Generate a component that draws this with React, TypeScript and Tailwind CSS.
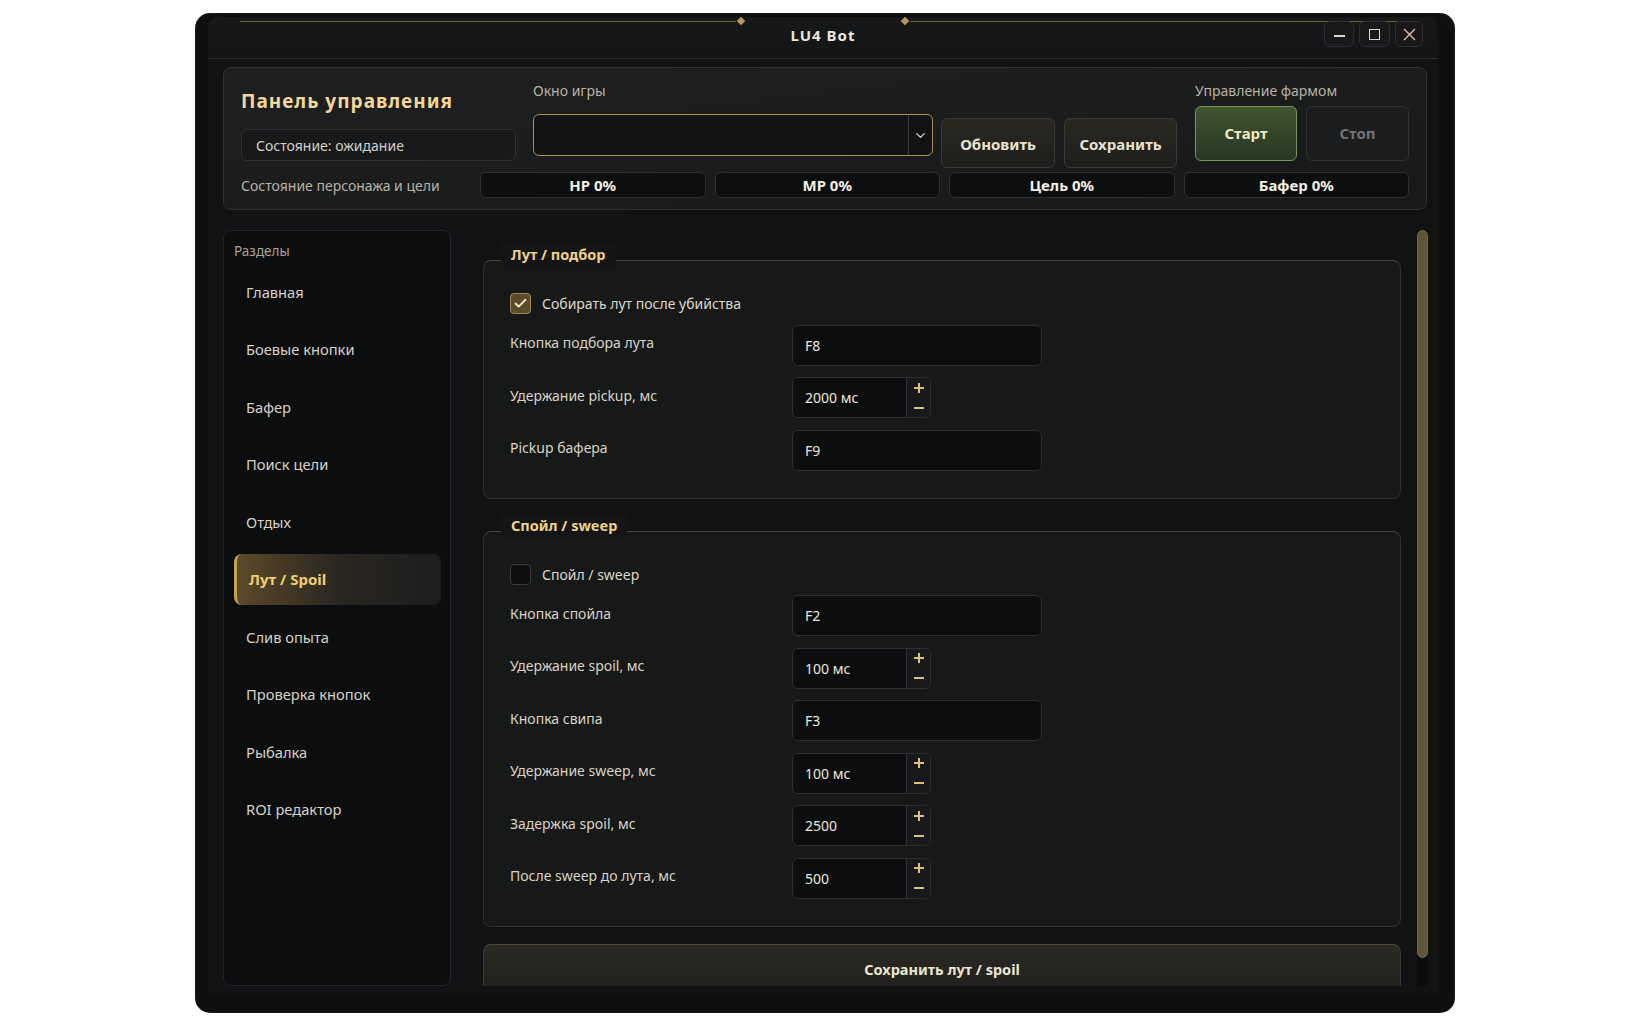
import { Check, ChevronDown } from 'lucide-react';

const sections = [
  'Главная',
  'Боевые кнопки',
  'Бафер',
  'Поиск цели',
  'Отдых',
  'Лут / Spoil',
  'Слив опыта',
  'Проверка кнопок',
  'Рыбалка',
  'ROI редактор',
];

function Plus() {
  return (
    <svg width="12" height="12" viewBox="0 0 12 12">
      <path d="M6 1v10M1 6h10" stroke="#dcc47f" strokeWidth="2" />
    </svg>
  );
}

function Minus() {
  return (
    <svg width="12" height="12" viewBox="0 0 12 12">
      <path d="M1 6h10" stroke="#dcc47f" strokeWidth="2" />
    </svg>
  );
}

function CheckBox({ checked, label }: { checked: boolean; label: string }) {
  return (
    <div className="flex items-center gap-[11px] h-[21px]">
      <div
        className={`w-[21px] h-[21px] rounded-[4px] border flex items-center justify-center ${
          checked ? 'bg-[#5b4a2b] border-[#a38853]' : 'bg-[#0d0e10] border-[#3a3b3e]'
        }`}
      >
        {checked && <Check size={15} strokeWidth={3} color="#f5e7c0" />}
      </div>
      <span className="text-[14px] text-[#ddd7ca]">{label}</span>
    </div>
  );
}

function TextRow({ label, value }: { label: string; value: string }) {
  return (
    <div className="flex items-center">
      <div className="w-[282px] pb-[5px] text-[14px] text-[#d9d3c6]">{label}</div>
      <div className="w-[250px] h-[41px] rounded-md border border-[#2d2e31] bg-[#0c0d0f] flex items-center px-[12px] text-[14px] text-[#ece6d8]">
        {value}
      </div>
    </div>
  );
}

function SpinRow({ label, value }: { label: string; value: string }) {
  return (
    <div className="flex items-center">
      <div className="w-[282px] pb-[5px] text-[14px] text-[#d9d3c6]">{label}</div>
      <div className="w-[139px] h-[41px] rounded-md border border-[#2d2e31] bg-[#0c0d0f] flex overflow-hidden">
        <div className="flex-1 flex items-center px-[12px] text-[14px] text-[#ece6d8]">{value}</div>
        <div className="w-[24px] border-l border-[#2d2e31] bg-[#18191b] flex flex-col items-center justify-center gap-[8px]">
          <Plus />
          <Minus />
        </div>
      </div>
    </div>
  );
}

function Group({ title, children }: { title: string; children: React.ReactNode }) {
  return (
    <div className="relative rounded-lg border border-[#2d2f30] border-t-[#48432f] bg-[#171918] px-[26px] pt-[32px] pb-[27px]">
      <div className="absolute -top-[18px] left-[17px] px-[10px] h-[24px] flex items-center bg-[#141516] text-[14.5px] font-bold text-[#efd08c]">
        {title}
      </div>
      {children}
    </div>
  );
}

export default function App() {
  return (
    <div className="min-h-screen bg-white pl-[196px] pt-[14px] font-['Noto_Sans',sans-serif]">
      <div className="w-[1258px] h-[998px] rounded-[14px] bg-[#0e0f11] flex flex-col pl-[12px] pr-[16px] pt-[3px] pb-[16px] shadow-[0_0_0_1px_#1a1b1d]">
        <div className="flex-1 flex flex-col bg-[#111214] rounded-t-[10px] min-h-0">
          {/* title bar */}
          <div className="relative h-[42px] shrink-0 rounded-t-[10px] bg-gradient-to-b from-[#17181a] to-[#131416] border-b border-[#2b2c2e] grid grid-cols-[1fr_auto_1fr]">
            <div className="absolute top-[4px] left-[32px] w-[496px] h-px bg-[#6f5e37]" />
            <div className="absolute top-[1px] left-[530px] w-[6px] h-[6px] rotate-45 bg-[#b8985a]" />
            <div className="absolute top-[1px] left-[694px] w-[6px] h-[6px] rotate-45 bg-[#b8985a]" />
            <div className="absolute top-[4px] left-[702px] w-[487px] h-px bg-[#6f5e37]" />
            <div />
            <div className="flex items-center pb-[4px] text-[15px] font-bold tracking-[1px] text-[#ece7dc]">LU4 Bot</div>
            <div className="flex justify-end items-start pt-[4px] pr-[15px] gap-[5px] relative">
              <div className="w-[30px] h-[26px] rounded-md border border-[#2e2f32] bg-[#18191b] flex items-center justify-center">
                <div className="w-[11px] h-[1.5px] bg-[#ddd6c6] mt-[4px]" />
              </div>
              <div className="w-[31px] h-[26px] rounded-md border border-[#2e2f32] bg-[#18191b] flex items-center justify-center">
                <div className="w-[11px] h-[11px] border-[1.5px] border-[#ddd6c6]" />
              </div>
              <div className="w-[28px] h-[26px] rounded-md border border-[#2e2f32] bg-[#1b1718] flex items-center justify-center">
                <svg width="13" height="13" viewBox="0 0 13 13">
                  <path d="M1 1l11 11M12 1L1 12" stroke="#e3bdb4" strokeWidth="1.4" />
                </svg>
              </div>
            </div>
          </div>

          {/* body */}
          <div className="flex-1 flex flex-col pl-[15px] pr-[10px] pt-[8px] pb-[10px] min-h-0">
            {/* control panel */}
            <div className="h-[143px] mr-px shrink-0 rounded-lg border border-[#33312a] bg-gradient-to-br from-[#1e1f1f] to-[#18191a] px-[17px] flex flex-col">
              <div className="flex h-[100px]">
                <div className="w-[275px] flex flex-col">
                  <div className="mt-[21px] h-[24px] text-[19px] leading-[24px] font-bold tracking-[1px] text-[#f2d69b]">
                    Панель управления
                  </div>
                  <div className="mt-[16px] h-[32px] rounded-md border border-[#2f3134] bg-[#17191b] flex items-center px-[14px] text-[14px] text-[#d6d0c3]">
                    Состояние: ожидание
                  </div>
                </div>
                <div className="ml-[17px] w-[400px] flex flex-col">
                  <div className="mt-[12px] h-[20px] text-[14px] text-[#b8b2a5]">Окно игры</div>
                  <div className="mt-[14px] h-[42px] rounded-md border border-[#b18e4a] bg-[#111315] flex justify-end">
                    <div className="w-[24px] border-l border-[#3a3a3a] flex items-center justify-center">
                      <ChevronDown size={15} strokeWidth={2.2} color="#dcd3bd" />
                    </div>
                  </div>
                </div>
                <div className="ml-[8px] mt-[50px] w-[114px] h-[50px] rounded-md border border-[#3a3935] bg-gradient-to-b from-[#2a2821] to-[#1e1e1d] flex items-center justify-center pt-[2px] text-[15px] font-bold text-[#e9e2d0]">
                  Обновить
                </div>
                <div className="ml-[9px] mt-[50px] w-[113px] h-[50px] rounded-md border border-[#3a3935] bg-gradient-to-b from-[#2a2821] to-[#1e1e1d] flex items-center justify-center pt-[2px] text-[15px] font-bold text-[#e9e2d0]">
                  Сохранить
                </div>
                <div className="ml-[18px] flex-1 flex flex-col">
                  <div className="mt-[12px] h-[20px] text-[14px] text-[#b8b2a5]">Управление фармом</div>
                  <div className="mt-[6px] flex gap-[9px]">
                    <div className="w-[102px] h-[55px] rounded-md border border-[#7a955a] bg-gradient-to-b from-[#405430] to-[#293722] flex items-center justify-center text-[15px] font-bold text-[#f3e6c2]">
                      Старт
                    </div>
                    <div className="w-[103px] h-[55px] rounded-md border border-[#2f3032] bg-[#1b1c1d] flex items-center justify-center text-[15px] font-bold text-[#6f7276]">
                      Стоп
                    </div>
                  </div>
                </div>
              </div>
              <div className="mt-[4px] flex items-center h-[26px]">
                <div className="w-[239px] text-[14px] text-[#b8b2a5]">Состояние персонажа и цели</div>
                <div className="flex-1 grid grid-cols-4 gap-[9px]">
                  {['HP 0%', 'MP 0%', 'Цель 0%', 'Бафер 0%'].map((b) => (
                    <div
                      key={b}
                      className="h-[26px] rounded-md border border-[#2e2f31] bg-[#0d0e10] flex items-center justify-center text-[15px] font-bold text-[#f3efe4]"
                    >
                      {b}
                    </div>
                  ))}
                </div>
              </div>
            </div>

            {/* main */}
            <div className="mt-[20px] flex-1 flex min-h-0">
              <div className="w-[228px] rounded-lg border border-[#232427] bg-[#0c0d0f] px-[10px] pr-[9px] pt-[11px] flex flex-col">
                <div className="h-[18px] text-[13.5px] leading-[18px] text-[#a9a397]">Разделы</div>
                <div className="mt-[6.5px] flex flex-col gap-[6.5px]">
                  {sections.map((s) =>
                    s === 'Лут / Spoil' ? (
                      <div
                        key={s}
                        className="h-[51px] rounded-lg border-l-[3px] border-[#c9a24f] bg-gradient-to-r from-[#5c4a2a] via-[#2a2620] to-[#1c1d1e] flex items-center pl-[12px] text-[15px] font-bold text-[#f2cd6c]"
                      >
                        {s}
                      </div>
                    ) : (
                      <div key={s} className="h-[51px] flex items-center pl-[12px] text-[14.7px] text-[#d8d2c5]">
                        {s}
                      </div>
                    )
                  )}
                </div>
              </div>

              <div className="ml-[32px] flex-1 min-w-0 overflow-hidden pt-[30px] flex flex-col">
                <Group title="Лут / подбор">
                  <CheckBox checked label="Собирать лут после убийства" />
                  <div className="mt-[10.5px] flex flex-col gap-[11.5px]">
                    <TextRow label="Кнопка подбора лута" value="F8" />
                    <SpinRow label="Удержание pickup, мс" value="2000 мс" />
                    <TextRow label="Pickup бафера" value="F9" />
                  </div>
                </Group>
                <div className="mt-[32px]">
                  <Group title="Спойл / sweep">
                    <CheckBox checked={false} label="Спойл / sweep" />
                    <div className="mt-[10.5px] flex flex-col gap-[11.5px]">
                      <TextRow label="Кнопка спойла" value="F2" />
                      <SpinRow label="Удержание spoil, мс" value="100 мс" />
                      <TextRow label="Кнопка свипа" value="F3" />
                      <SpinRow label="Удержание sweep, мс" value="100 мс" />
                      <SpinRow label="Задержка spoil, мс" value="2500" />
                      <SpinRow label="После sweep до лута, мс" value="500" />
                    </div>
                  </Group>
                </div>
                <div className="mt-[17px] shrink-0 h-[52px] rounded-t-lg border border-[#3a3833] border-t-[#4d4836] bg-gradient-to-b from-[#2b2923] to-[#1f1f1d] flex items-center justify-center text-[14.5px] font-bold text-[#ece5d3]">
                  Сохранить лут / spoil
                </div>
              </div>

              <div className="ml-[16px] w-[11px] flex flex-col bg-[#0b0c0d]">
                <div className="flex-1 rounded-full bg-[#615539] border border-[#74664a]" />
                <div className="h-[28px]" />
              </div>
            </div>
          </div>
        </div>
      </div>
    </div>
  );
}
